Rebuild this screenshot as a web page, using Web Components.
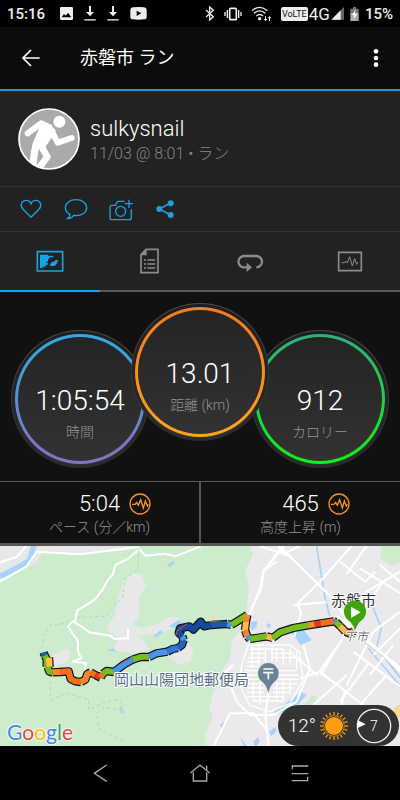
<!DOCTYPE html>
<html lang="ja">
<head>
<meta charset="utf-8">
<meta name="viewport" content="width=device-width, initial-scale=1">
<title>赤磐市 ラン</title>
<style>
html, body{
    margin: 0;
    background: #000;
}
body{
    font-family: Roboto, "Noto Sans CJK JP", sans-serif;
    color: #fff;
}
</style>
</head>
<body>
<activity-page>
    <status-bar slot="top"></status-bar>
    <app-header slot="top">赤磐市 ラン</app-header>
    <profile-card>
        <span slot="name">sulkysnail</span>
        <span slot="detail">11/03 @ 8:01 • ラン</span>
    </profile-card>
    <action-bar></action-bar>
    <tab-bar></tab-bar>
    <gauge-group>
        <metric-gauge from="#35a8e0" to="#8074c4">1:05:54<span slot="label">時間</span></metric-gauge>
        <metric-gauge class="front" from="#f47b20" to="#ffa21f">13.01<span slot="label">距離 (km)</span></metric-gauge>
        <metric-gauge from="#2fae7c" to="#12f312">912<span slot="label">カロリー</span></metric-gauge>
    </gauge-group>
    <stat-row>
        <stat-cell>5:04<span slot="label">ペース (分／km)</span></stat-cell>
        <stat-cell>465<span slot="label">高度上昇 (m)</span></stat-cell>
    </stat-row>
    <route-map>
        <weather-pill>12°<span slot="wind">7</span></weather-pill>
    </route-map>
    <system-nav></system-nav>
</activity-page>

<script>
//base: every component only has to give its template
class BaseComponent extends HTMLElement{
    constructor(){
        super()
        this.attachShadow({mode: "open"})
    }
    connectedCallback(){
        const template=document.createElement("template")
        template.innerHTML=this.getTemplate()
        this.shadowRoot.replaceChildren(template.content.cloneNode(true))
    }
}

class ActivityPage extends BaseComponent{
    getTemplate(){
        return `<style>
        :host{
            display: flex;
            flex-direction: column;
            min-height: 100vh;
            background: #111;
        }
        ::slotted(route-map){
            flex: 1;
        }
        </style>
        <slot name="top"></slot>
        <slot></slot>`
    }
}
customElements.define("activity-page",ActivityPage)

class StatusBar extends BaseComponent{
    getTemplate(){
        return `<style>
        :host{
            display: flex;
            justify-content: space-between;
            align-items: center;
            height: 27px;
            padding: 0 7px;
            background: #000;
            color: #eee;
            font-size: 15px;
            font-weight: 500;
        }
        .side{
            display: flex;
            align-items: center;
            gap: 11px;
        }
        .time{
            padding-right: 4px;
        }
        .right{
            gap: 6px;
        }
        .wide{
            gap: 9px;
            display: flex;
            align-items: center;
            padding-right: 3px;
        }
        .net{
            display: flex;
            align-items: center;
            gap: 1px;
        }
        .volte{
            background: #eee;
            color: #111;
            border-radius: 2px;
            font-size: 9px;
            font-weight: 400;
            line-height: 14px;
            padding: 0 1px;
        }
        .gen{
            font-size: 17px;
            font-weight: 400;
            line-height: 20px;
        }
        svg{
            display: block;
            fill: #eee;
        }
        </style>
        <div class="side">
            <span class="time">15:16</span>
            <svg width="13" height="13" viewBox="0 0 39 39"><path fill-rule="evenodd" d="M4 0h31q4 0 4 4v31q0 4-4 4H4q-4 0-4-4V4q0-4 4-4zM5 31h29L24 17l-7 9-5-5z"/></svg>
            <svg width="12" height="15" viewBox="0 0 36 45"><path d="M15 0h6v18h9L18 31 6 18h9z"/><path fill="#bbb" d="M1 39h34v5H1z"/></svg>
            <svg width="12" height="15" viewBox="0 0 36 45"><path d="M15 0h6v18h9L18 31 6 18h9z"/><path fill="#bbb" d="M1 39h34v5H1z"/></svg>
            <svg width="17" height="13" viewBox="0 0 51 39"><path fill-rule="evenodd" d="M9 1q16-2 33 0 8 1 8 8v20q0 8-8 8-17 2-33 0-8 0-8-8V9q0-7 8-8zM20 11v16l14-8z"/></svg>
        </div>
        <div class="side right">
            <div class="wide">
                <svg width="10" height="15" viewBox="0 0 30 45"><path d="M3 12l22 20-11 10V3l11 10L3 33" fill="none" stroke="#eee" stroke-width="4"/></svg>
                <svg width="18" height="14" viewBox="0 0 54 42"><rect x="17" y="4" width="20" height="34" rx="3" fill="none" stroke="#eee" stroke-width="5"/><path d="M8 9h4v24H8zM1 15h4v12H1zM42 9h4v24h-4zM49 15h4v12h-4z"/></svg>
                <svg width="21" height="16" viewBox="0 0 63 48"><g fill="none" stroke="#eee" stroke-width="4"><path d="M3 14Q26-6 49 14M9 22Q26 7 43 22M16 30Q26 21 36 30"/></g><circle cx="26" cy="38" r="5"/><path d="M42 31h3v8h4l-5 7-6-7h4zM54 46h3v-9h4l-5-7-6 7h4z"/></svg>
            </div>
            <div class="net">
                <span class="volte">VoLTE</span>
                <span class="gen">4G</span>
                <svg width="13" height="13" viewBox="0 0 39 39"><path fill="#666" d="M39 0v38H1z"/><path d="M29 10v28H1z"/></svg>
            </div>
            <svg width="9" height="14" viewBox="0 0 27 42"><path fill="#777" d="M9 0h9v5h8v12H1V5h8z"/><path fill="#aaa" d="M1 17h25v25H1z"/><path fill="#fff" d="M17 7L6 25h7l-3 13 12-18h-7z"/></svg>
            <span>15%</span>
        </div>`
    }
}
customElements.define("status-bar",StatusBar)

class AppHeader extends BaseComponent{
    getTemplate(){
        return `<style>
        :host{
            display: flex;
            align-items: center;
            height: 62px;
            background: #0c0c0c;
            border-bottom: 2px solid #2196d3;
        }
        h1{
            flex: 1;
            margin: 0;
            padding-left: 18px;
            font-size: 18px;
            line-height: 28px;
            font-weight: 400;
        }
        button{
            border: 0;
            padding: 0;
            background: none;
            display: grid;
            place-items: center;
            height: 48px;
        }
        .back{
            width: 62px;
        }
        .more{
            width: 49px;
        }
        </style>
        <button class="back" aria-label="戻る"><svg width="18" height="18" viewBox="0 0 54 54"><path d="M53 27H4M27 3L3 27l24 24" fill="none" stroke="#fff" stroke-width="5"/></svg></button>
        <h1><slot></slot></h1>
        <button class="more" aria-label="メニュー"><svg width="6" height="20" viewBox="0 0 18 60" fill="#fff"><circle cx="9" cy="10" r="7"/><circle cx="9" cy="30" r="7"/><circle cx="9" cy="50" r="7"/></svg></button>`
    }
}
customElements.define("app-header",AppHeader)

class ProfileCard extends BaseComponent{
    getTemplate(){
        return `<style>
        :host{
            display: flex;
            align-items: center;
            gap: 10px;
            height: 95px;
            padding: 0 18px;
            background: #222;
            border-bottom: 1px solid #333;
        }
        .text{
            padding-top: 4px;
        }
        .name{
            font-size: 22px;
            line-height: 26px;
            font-weight: 300;
        }
        .detail{
            font-size: 16px;
            line-height: 24px;
            font-weight: 300;
            color: #858585;
        }
        </style>
        <svg width="62" height="62" viewBox="0 0 186 186">
            <clipPath id="face"><circle cx="93" cy="93" r="90"/></clipPath>
            <circle cx="93" cy="93" r="90" fill="#aaa"/>
            <g clip-path="url(#face)" fill="none" stroke="#fff" stroke-width="18" stroke-linecap="round" stroke-linejoin="round">
                <circle cx="124" cy="41" r="18" fill="#fff" stroke="none"/>
                <path d="M29 76L69 46l26 12 24 46 42-14"/>
                <path d="M72 45l34 24-32 48-24-7 19-44z" fill="#fff" stroke-width="14"/>
                <path d="M56 108q-8 20-11 66" stroke-width="22"/>
                <path d="M68 112l20 34-22 30" stroke-width="20"/>
            </g>
            <circle cx="93" cy="93" r="90" fill="none" stroke="#fff" stroke-width="5"/>
        </svg>
        <div class="text">
            <div class="name"><slot name="name"></slot></div>
            <div class="detail"><slot name="detail"></slot></div>
        </div>`
    }
}
customElements.define("profile-card",ProfileCard)

class ActionBar extends BaseComponent{
    getTemplate(){
        return `<style>
        :host{
            display: flex;
            height: 44px;
            padding: 0 8px;
            background: #222;
            border-bottom: 1px solid #333;
        }
        button{
            width: 45px;
            border: 0;
            padding: 0;
            background: none;
            display: grid;
            place-items: center;
        }
        svg{
            fill: none;
            stroke: #1f9fdc;
            stroke-width: 4;
        }
        </style>
        <button aria-label="いいね"><svg width="24" height="24" viewBox="0 0 72 72"><path d="M36 61L12 37C2 27 7 10 22 10q10 0 14 10 4-10 14-10c15 0 20 17 10 27z"/></svg></button>
        <button aria-label="コメント"><svg width="24" height="24" viewBox="0 0 72 72"><path d="M18 52C9 47 4 40 4 32 4 18 18 8 36 8s32 10 32 24-14 24-32 24l-7-1C25 61 18 65 10 65q8-6 8-13z"/></svg></button>
        <button aria-label="写真を追加"><svg width="24" height="24" viewBox="0 0 72 72"><path d="M47 13H27q-3 0-4 4l-3 8H9q-6 0-6 6v31q0 6 6 6h52q6 0 6-6V37M60 8v25M47 20h25"/><circle cx="35" cy="43" r="15"/></svg></button>
        <button aria-label="共有"><svg width="24" height="24" viewBox="0 0 72 72"><path d="M50 18L16 36l34 18" stroke-width="5"/><g fill="#1f9fdc" stroke="none"><circle cx="50" cy="19" r="9"/><circle cx="16" cy="36" r="9"/><circle cx="50" cy="54" r="9"/></g></svg></button>`
    }
}
customElements.define("action-bar",ActionBar)

class TabBar extends BaseComponent{
    getTemplate(){
        return `<style>
        :host{
            display: grid;
            grid-template-columns: repeat(4, 1fr);
            height: 60px;
            background: #222;
        }
        button{
            border: 0;
            border-bottom: 2px solid #5a5a5a;
            padding: 0;
            background: none;
            color: #8c8c8c;
            display: grid;
            place-items: center;
        }
        button[aria-selected=true]{
            color: #14a4e8;
            border-color: #14a4e8;
        }
        svg{
            fill: none;
            stroke: currentColor;
            stroke-width: 5;
        }
        </style>
        <button role="tab" aria-label="マップ" aria-selected="true"><svg width="28" height="28" viewBox="0 0 84 84"><path d="M4 14h76v58H4z"/><path d="M12 23h24v3h16v5H40v6h-4v7h-5v4h5v5h-7v6h-9v4h-8zM41 53l8-9h6l3-5h10l-4 4v5l-7 8-12 2z" fill="currentColor" stroke="none"/></svg></button>
        <button role="tab" aria-label="詳細" aria-selected="false"><svg width="28" height="28" viewBox="0 0 84 84"><path d="M30 7h36v70H15V23z"/><path d="M32 7v18H15z" fill="currentColor" stroke="none"/><path d="M24 39h6m4 0h24M24 51h6m4 0h24M24 63h6m4 0h24" stroke-width="4"/></svg></button>
        <button role="tab" aria-label="ラップ" aria-selected="false"><svg width="28" height="28" viewBox="0 0 84 84"><path d="M34 61h-8a17 17 0 0 1-3-34h38a17 17 0 0 1 0 34" stroke-width="7"/><path d="M32 47l16 14-16 14z" fill="currentColor" stroke="none"/></svg></button>
        <button role="tab" aria-label="グラフ" aria-selected="false"><svg width="28" height="28" viewBox="0 0 84 84"><path d="M8 16h68v55H8z"/><path d="M17 47h9l3-5 5 6 7-19 8 28 7-22 6 17 3-7" stroke-width="3"/></svg></button>`
    }
}
customElements.define("tab-bar",TabBar)

class GaugeGroup extends BaseComponent{
    getTemplate(){
        return `<style>
        :host{
            display: flex;
            justify-content: center;
            padding: 11px 0 13px;
            background: #111;
        }
        ::slotted(metric-gauge){
            margin-top: 27px;
        }
        /* the middle gauge lies over its neighbours */
        ::slotted(.front){
            margin: 0 -18px 27px;
            z-index: 1;
        }
        </style>
        <slot></slot>`
    }
}
customElements.define("gauge-group",GaugeGroup)

class MetricGauge extends BaseComponent{
    getTemplate(){
        return `<style>
        :host{
            --from: ${this.getAttribute("from")};
            --to: ${this.getAttribute("to")};
            box-sizing: border-box;
            width: 138px;
            height: 138px;
            padding: 3px;
            border: 1px solid transparent;
            border-radius: 50%;
            background: linear-gradient(#1e1e1e, #2c2c2c) padding-box, linear-gradient(#4a4a4a, #292929) border-box;
        }
        .ring{
            box-sizing: border-box;
            height: 100%;
            display: flex;
            flex-direction: column;
            align-items: center;
            padding-top: 46px;
            border: 3px solid transparent;
            border-radius: 50%;
            background: linear-gradient(#242424, #323232) padding-box, linear-gradient(var(--from), var(--to)) border-box;
        }
        .value{
            font-size: 28px;
            line-height: 36px;
            font-weight: 300;
        }
        .label{
            margin-top: 3px;
            font-size: 14px;
            line-height: 20px;
            font-weight: 300;
            color: #949494;
        }
        </style>
        <div class="ring">
            <div class="value"><slot></slot></div>
            <div class="label"><slot name="label"></slot></div>
        </div>`
    }
}
customElements.define("metric-gauge",MetricGauge)

class StatRow extends BaseComponent{
    getTemplate(){
        return `<style>
        :host{
            display: grid;
            grid-template-columns: 1fr 1fr;
            gap: 2px;
            background: #555;
            border-top: 1px solid #555;
            border-bottom: 3px solid #555;
        }
        </style>
        <slot></slot>`
    }
}
customElements.define("stat-row",StatRow)

class StatCell extends BaseComponent{
    getTemplate(){
        return `<style>
        :host{
            display: block;
            padding: 9px 0 5px;
            background: #111;
            text-align: center;
        }
        .top{
            display: grid;
            grid-template-columns: 1fr auto 1fr;
            align-items: center;
            gap: 9px;
            font-size: 22px;
            line-height: 26px;
            font-weight: 300;
        }
        .value{
            grid-column: 2;
        }
        svg{
            display: block;
        }
        .label{
            font-size: 14px;
            line-height: 21px;
            font-weight: 300;
            color: #949494;
        }
        </style>
        <div class="top">
            <span class="value"><slot></slot></span>
            <svg width="22" height="22" viewBox="0 0 66 66" fill="none" stroke="#f7941e" stroke-width="4"><circle cx="33" cy="33" r="30"/><path d="M9 34h9l5-6 5 9 7-17 8 25 6-21 6 15 3-5"/></svg>
        </div>
        <div class="label"><slot name="label"></slot></div>`
    }
}
customElements.define("stat-cell",StatCell)

//colour, then the points of each piece of the track
const track=[
    ["#1b63b8","131,322 134,332"],
    ["#7ab829","134,332 140,342 140,365"],
    ["#ffc23c","147,338 149,366"],
    ["#7ab829","143,366 148,380 158,382"],
    ["#f8872b","158,382 182,381"],
    ["#f36f1e","182,381 206,379 212,402 226,409 243,411"],
    ["#f8872b","243,411 256,404 262,387 272,382"],
    ["#f36f1e","272,382 286,390"],
    ["#e03a1a","286,390 302,398"],
    ["#f36f1e","302,398 308,386"],
    ["#77bf20","308,386 320,378 342,381"],
    ["#4a93f0","342,381 372,358 398,344"],
    ["#77bf20","398,344 422,336 447,336"],
    ["#4a93f0","447,336 470,325 502,320"],
    ["#2f78dc","502,320 518,312 534,309"],
    ["#2162bd","534,309 546,300 551,285"],
    ["#4a93f0","551,285 547,273"],
    ["#15499c","547,273 536,264 540,250 568,244 580,254 602,230 612,244 634,240"],
    ["#1d57ad","634,240 664,238 682,237"],
    ["#4a93f0","682,237 694,240"],
    ["#77bf20","694,240 742,210"],
    ["#f8872b","742,210 738,230"],
    ["#ffb84a","738,230 735,256"],
    ["#f8872b","735,256 742,274"],
    ["#4a93f0","742,274 750,282"],
    ["#77bf20","750,282 800,274"],
    ["#ffb84a","800,274 818,279"],
    ["#77bf20","818,279 840,262 880,249 924,241"],
    ["#f8872b","924,241 944,238"],
    ["#e03a1a","944,238 962,235"],
    ["#f36f1e","962,235 1002,229"],
    ["#4a93f0","1002,229 1008,231"],
    ["#77bf20","1008,231 1020,243"],
    ["#ffb84a","1020,243 1036,260"],
    ["#f8872b","1036,260 1050,266 1062,258"]
]

class RouteMap extends BaseComponent{
    getTrack(){
        const line=(color,points,width)=>`<polyline points="${points}" stroke="${color}" stroke-width="${width}"/>`
        return track.map(([,points])=>line("#111",points,25)).join("")+
            track.map(([color,points])=>line(color,points,18)).join("")
    }
    getTemplate(){
        return `<style>
        :host{
            display: block;
            position: relative;
            min-height: 200px;
            overflow: hidden;
            background: #cdeccd;
        }
        .map{
            position: absolute;
            inset: 0;
            width: 100%;
            height: 100%;
        }
        text{
            paint-order: stroke;
            stroke: #fff;
            stroke-width: 2px;
            stroke-linejoin: round;
        }
        .google{
            position: absolute;
            left: 7px;
            bottom: 2px;
            font: 400 21px/24px Lato, sans-serif;
            text-decoration: none;
            text-shadow: 0 0 2px #fff, 0 0 2px #fff, 0 0 2px #fff;
        }
        .b{ color: #4285f4; }
        .r{ color: #ea4335; }
        .y{ color: #fbbc05; }
        .g{ color: #34a853; }
        ::slotted(weather-pill){
            position: absolute;
            right: 1px;
            bottom: 0;
        }
        </style>
        <svg class="map" viewBox="0 0 400 200" preserveAspectRatio="xMidYMid slice">
            <g transform="scale(.33333) translate(0 -3)" fill="none" stroke-linejoin="round">
                <path fill="#ebe9ec" d="M0 0h1200v610H0z"/>
                <!-- woods -->
                <path fill="#cdeccd" d="M0 0h750l8 30-22 45 10 50-8 80-8 40-34 40-6 60-20 25-8 40-22 30-12 55 10 20-25 60 8 35H0z"/>
                <path fill="#cdeccd" d="M1145 0h55v50l-25 12-35-22zM910 480l30-30 10 5-10 35z"/>
                <path fill="#d9eedb" d="M755 395l20-25 15 20-10 30z"/>
                <!-- open ground -->
                <path fill="#e8e8e8" d="M0 0h410l-25 14-150 12-105-5-20 30L0 110zM372 108l28-24 24 4 14 36-20 30 0 60-20 26 30 10 50-16 36-20 24 4-10 24-50 24-60 6 30 40-30 16-40-8-38-4 14-36-36-26 26-44 12-60zM160 330l40-20 14 14-10 26-40 14-20-14zM505 335l60-40 15 18-8 36-35 10z"/>
                <!-- water -->
                <path stroke="#a6d3fb" stroke-width="16" d="M0 94l50-25 38-22 14-47"/>
                <path fill="#a6d3fb" d="M500 62l20-14 4 6-14 12zM320 318l18-8 14 10zM460 274l20-18 10 6-20 14zM505 245l30-20 12 8-20 16zM360 480l14 26-12-2zM870 260l20 22 10 18 35-14-20-26-30-22zM820 502l85-62 15 10-30 32-60 26zM752 230l20-2-2 18-16 12zM800 233l14 8-10 10zM720 575l24 34h-10zM760 590l12-14 8 12-14 22zM806 560l20-14 4 12-16 16zM660 540l12-10-8 20z"/>
                <path stroke="#a6d3fb" stroke-width="5" d="M950 3l24 150 15 60M1105 310l95 112M1120 190l24 60-14 56 70 90"/>
                <!-- roads -->
                <g stroke="#fff" stroke-width="6">
                    <path d="M0 52L50 36 82 0M0 110l80-46 30-44 130 8 176-22M416 10l20 22 60-6 30 8 76-30M416 14l-30 26-40 20-8 30-14 14-14 26-24 32-30 20-24 14-8 36 20 12 24 18 62 10 14 10 40-2v-30M230 218l-26 26 30 46 0 30 10 20-26 10 40 4-4 24"/>
                    <path stroke-width="8" d="M850 3l-60 76-8 50-30 70-18 60M845 10l165 162 30 60 160 145M835 3l25 30M1010 215l60 44 70 60 60 50"/>
                    <path d="M780 3l70 24 50-24M790 78l40-28M1055 3l-96 108-66 64 10 30-20 70M1200 80l-110 66-66 140-60 100 70 50-20 100M1080 70l120 74M1020 50l76 60 30-30M1140 60l60 50M1150 110l-66 90M1100 3l-60 84M1200 200l-80 60-80 160M1080 280l-40-16-90 126-70-60M960 380l130 100M1060 320l140 104M1160 390l-80 90M1110 350l-90 120M1180 300l-70 90M1200 250l-80 80M700 360l-24 20 34 90 40 40 70 0 70-40 40-100-20-70M806 440l-10 70 10 100M640 605l50-100 70 0 40 50M880 180l100-8M900 400l60-20M940 480l100-90"/>
                </g>
                <!-- housing blocks -->
                <path stroke="#fff" stroke-width="4" d="M745 300l-20 60-6 60 30 60 60 20 60-24 40-70-10-86-30-20zM750 312h100M750 325h46M814 325h70M745 338h46M814 338h76M740 351h40M740 364h36M830 351v-40M850 361v-50M870 361v-50M890 371v-60M736 377h40M736 390h36M836 377h54M836 390h60M730 403h46M836 403h60M730 416h56M830 416h64M740 429h50M820 429h60M740 442h50M820 442h50M740 455h110M760 468h90M756 300v70M776 300v60M796 300v50M816 300v50M760 410v60M780 410v70M830 410v60M850 400v70M870 400v50"/>
                <path stroke="#b5c4b3" stroke-width="2" stroke-dasharray="10 8" d="M415 10v66l-40 24-8 60-38 34-10 20-90 4-40 18-44 6-14 40-8 38M150 390l2 74 50-20 64 20v30l60-26 34-4 10 30-60-6-20 20 8 44 76 40"/>
                <path stroke="#bbb" stroke-width="2" d="M1066 270l90 70 44 60"/>
                <path fill="#f6d89a" d="M1182 488l18-10v40l-18-4z"/>
                ${this.getTrack()}
                <path stroke="#e0522a" stroke-width="3" d="M366 354l22-12M430 344l14-2M527 272l4-14 30-22M628 230l30-2"/>
                <path fill="#6b8296" d="M805 444q-6-26-21-36a31 31 0 1 1 42 0q-15 10-21 36z"/>
                <path stroke="#fff" stroke-width="5" d="M790 372h30M790 383h30M805 383v20"/>
            </g>
            <text x="331" y="60" font-size="15" fill="#333">赤磐市</text>
            <text x="344" y="95" font-size="12" fill="#777" font-style="italic">下市</text>
            <text x="114" y="139" font-size="15" fill="#54708a">岡山山陽団地郵便局</text>
            <g transform="scale(.33333) translate(0 -3)">
                <path fill="#3fa50c" d="M1065 258q-6-24-22-34a33 33 0 1 1 44 0q-16 10-22 34z"/>
                <path fill="#fff" d="M1053 185v34l29-17z"/>
            </g>
        </svg>
        <a class="google" href="#"><span class="b">G</span><span class="r">o</span><span class="y">o</span><span class="b">g</span><span class="g">l</span><span class="r">e</span></a>
        <slot></slot>`
    }
}
customElements.define("route-map",RouteMap)

class WeatherPill extends BaseComponent{
    getRays(){
        let rays=""
        for(let i=0;i<20;i++){
            rays+=`<path d="M45 3v9" transform="rotate(${i*18} 45 45)"/>`
        }
        return rays
    }
    getTemplate(){
        return `<style>
        :host{
            display: flex;
            align-items: center;
            gap: 3px;
            box-sizing: border-box;
            height: 41px;
            padding: 0 7px 0 10px;
            border-radius: 21px;
            background: #333;
            font-size: 19px;
            font-weight: 300;
        }
        .wind{
            display: grid;
            place-items: center;
            margin-left: 4px;
            font-size: 14px;
        }
        .wind > *{
            grid-area: 1 / 1;
        }
        </style>
        <span><slot></slot></span>
        <svg width="30" height="30" viewBox="0 0 90 90"><circle cx="45" cy="45" r="27" fill="#ff9d0a"/><circle cx="45" cy="45" r="31" fill="none" stroke="#ffb02e" stroke-width="2"/><g stroke="#ff9d0a" stroke-width="4">${this.getRays()}</g></svg>
        <div class="wind">
            <svg width="36" height="36" viewBox="0 0 108 108"><circle cx="54" cy="54" r="50" fill="none" stroke="#eee" stroke-width="4"/><path d="M5 36l24 13L5 60z" fill="#fff"/></svg>
            <span><slot name="wind"></slot></span>
        </div>`
    }
}
customElements.define("weather-pill",WeatherPill)

class SystemNav extends BaseComponent{
    getTemplate(){
        return `<style>
        :host{
            display: grid;
            grid-template-columns: repeat(3, 1fr);
            height: 54px;
            padding: 0 12.5%;
            background: #000;
        }
        button{
            border: 0;
            padding: 0;
            background: none;
            display: grid;
            place-items: center;
        }
        svg{
            fill: none;
            stroke: #aaa;
            stroke-width: 4;
        }
        </style>
        <button aria-label="戻る"><svg width="20" height="20" viewBox="0 0 60 60"><path d="M50 6L13 31l37 24"/></svg></button>
        <button aria-label="ホーム"><svg width="20" height="20" viewBox="0 0 60 60"><path d="M1 30L30 6l29 24M10 28v26h40V28M50 22V8"/></svg></button>
        <button aria-label="履歴"><svg width="20" height="20" viewBox="0 0 60 60"><path d="M55 9H7v10M5 32h50M5 53h48V42"/></svg></button>`
    }
}
customElements.define("system-nav",SystemNav)
</script>
</body>
</html>
